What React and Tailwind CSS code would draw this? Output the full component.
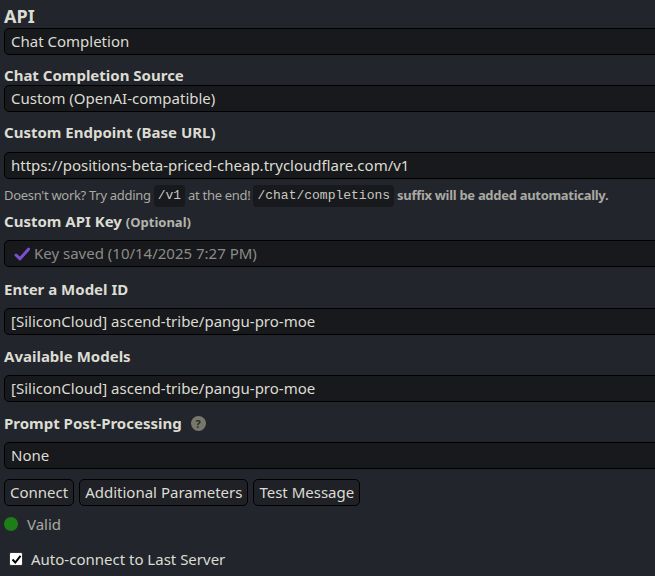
import React from 'react';

const font = { fontFamily: '"Noto Sans", "Open Sans", sans-serif' };

function Label({ children, className = '' }) {
  return (
    <div className={`text-[15px] leading-[20px] font-bold text-[#dcdcd2] ${className}`}>{children}</div>
  );
}

function Field({ children, className = '', muted = false }) {
  return (
    <div
      className={`w-[700px] h-[27px] bg-[#18191d] border border-black rounded-[5px] pl-[6px] flex items-center text-[15px] ${muted ? 'text-[#8c8c87]' : 'text-[#dcdcd2]'} ${className}`}
    >
      {children}
    </div>
  );
}

function Code({ children }) {
  return (
    <code className="font-['Liberation_Mono',monospace] text-[13px] bg-[#18191d] rounded-[4px] px-[4px] py-[1px] mx-[3px] text-[#c8c8c0] tracking-normal">
      {children}
    </code>
  );
}

export default function App() {
  return (
    <div className="w-[655px] h-[576px] overflow-hidden bg-[#22252c]" style={font}>
      <div className="pl-[4px]">
        {/* API */}
        <div className="pt-[4px] text-[18px] leading-[24px] font-bold text-[#dcdcd2]">API</div>
        <Field>Chat Completion</Field>

        <Label className="mt-[10px]">Chat Completion Source</Label>
        <Field>Custom (OpenAI-compatible)</Field>

        <Label className="mt-[10px]">Custom Endpoint (Base URL)</Label>
        <Field className="mt-[10px]">https://positions-beta-priced-cheap.trycloudflare.com/v1</Field>

        <div className="mt-[7px] h-[20px] flex items-center text-[13px] text-[#a9a9a2] tracking-[-0.3px] whitespace-nowrap">
          Doesn't work? Try adding<Code>/v1</Code>at the end!<Code>/chat/completions</Code>
          <b className="font-bold">suffix will be added automatically.</b>
        </div>

        <Label className="mt-[5px]">
          Custom API Key <span className="text-[13px] text-[#b4b4ac]">(Optional)</span>
        </Label>
        <Field className="mt-[8px]" muted>
          <svg width="16" height="14" viewBox="0 0 16 14" className="ml-[3px] mr-[4px]">
            <path d="M2 8 L6 11.8 L14.5 2.2" fill="none" stroke="#7c4fd0" strokeWidth="3" strokeLinecap="round" strokeLinejoin="round" />
          </svg>
          Key saved (10/14/2025 7:27 PM)
        </Field>

        <Label className="mt-[12px]">Enter a Model ID</Label>
        <Field className="mt-[9px]">[SiliconCloud] ascend-tribe/pangu-pro-moe</Field>

        <Label className="mt-[11px]">Available Models</Label>
        <Field className="mt-[9px]">[SiliconCloud] ascend-tribe/pangu-pro-moe</Field>

        <Label className="mt-[11px] flex items-center">
          Prompt Post-Processing
          <span className="ml-[9px] w-[15px] h-[15px] rounded-full bg-[#77776c] text-[#2a2a28] text-[11px] leading-none font-bold flex items-center justify-center">?</span>
        </Label>
        <Field className="mt-[9px]">None</Field>

        <div className="mt-[10px] flex gap-[5px]">
          {['Connect', 'Additional Parameters', 'Test Message'].map((b) => (
            <div
              key={b}
              className="h-[27px] px-[5px] flex items-center border border-black rounded-[5px] bg-[#1f2127] text-[15px] text-[#dcdcd2]"
            >
              {b}
            </div>
          ))}
        </div>

        <div className="mt-[10px] flex items-center h-[16px]">
          <span className="w-[14px] h-[14px] rounded-full bg-[#1d7d16]" />
          <span className="ml-[9px] text-[15px] text-[#a9a9a2]">Valid</span>
        </div>

        <div className="mt-[17px] flex items-center h-[20px] pl-[5px]">
          <span className="w-[14px] h-[14px] bg-white border border-[#333] rounded-[2px] flex items-center justify-center">
            <svg width="11" height="11" viewBox="0 0 11 11">
              <path d="M1.5 5.5 L4.3 8.5 L9.5 1.8" fill="none" stroke="black" strokeWidth="2" />
            </svg>
          </span>
          <span className="ml-[8px] text-[15px] text-[#dcdcd2]">Auto-connect to Last Server</span>
        </div>
      </div>
    </div>
  );
}
